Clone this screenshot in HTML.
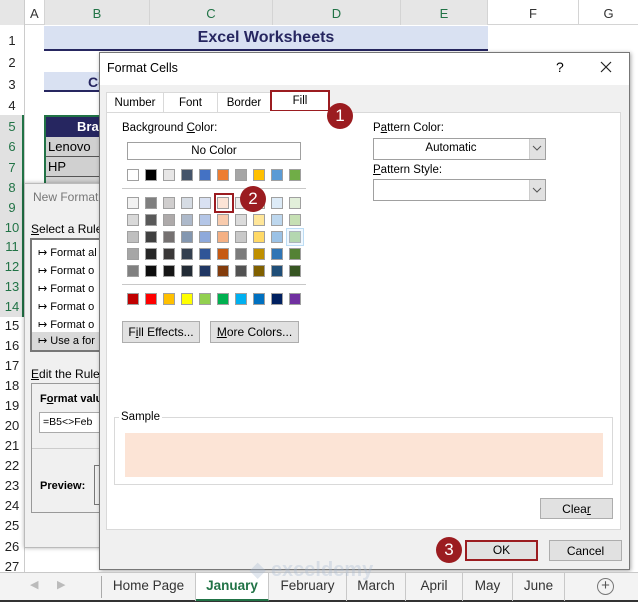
<!DOCTYPE html>
<html><head><meta charset="utf-8"><style>
*{box-sizing:border-box;margin:0;padding:0}
body{width:638px;height:602px;position:relative;overflow:hidden;background:#fff;font-family:"Liberation Sans",Arial,sans-serif;font-size:12px;color:#000}
.a{position:absolute}
.rn{position:absolute;left:0;width:24px;text-align:center;font-size:13px;color:#222}
.sw{position:absolute;width:12px;height:12px;border:1px solid #a0a0a0}
.btn{position:absolute;background:#e1e1e1;border:1px solid #adadad;text-align:center;font-size:12px;line-height:20px}
.mk{position:absolute;width:26px;height:26px;border-radius:50%;background:#9b1c20;color:#fff;font-size:17px;text-align:center;line-height:26px}
.tab{position:absolute;top:573px;height:28px;line-height:26px;text-align:center;font-size:13.5px;color:#333;border-right:1px solid #c8c8c8}
</style></head><body>
<div class="a" style="left:0;top:0;width:638px;height:25px;background:#fff;border-bottom:1px solid #d4d4d4"></div>
<div class="a" style="left:0;top:0;width:25px;height:25px;background:#e6e6e6;border-right:1px solid #ccc"></div>
<div class="a" style="left:44px;top:23px;width:444px;height:2px;background:#217346"></div>
<div class="a" style="left:30px;top:6px;color:#333;font-size:13px">A</div>
<div class="a" style="left:44px;top:0;width:105px;height:25px;border-left:1px solid #d4d4d4;text-align:center;line-height:28px;color:#217346;font-size:13px;background:#e6e6e6">B</div>
<div class="a" style="left:149px;top:0;width:123px;height:25px;border-left:1px solid #d4d4d4;text-align:center;line-height:28px;color:#217346;font-size:13px;background:#e6e6e6">C</div>
<div class="a" style="left:272px;top:0;width:128px;height:25px;border-left:1px solid #d4d4d4;text-align:center;line-height:28px;color:#217346;font-size:13px;background:#e6e6e6">D</div>
<div class="a" style="left:400px;top:0;width:88px;height:25px;border-left:1px solid #d4d4d4;border-right:1px solid #d4d4d4;text-align:center;line-height:28px;color:#217346;font-size:13px;background:#e6e6e6">E</div>
<div class="a" style="left:488px;top:0;width:90px;height:25px;text-align:center;line-height:28px;color:#333;font-size:13px">F</div>
<div class="a" style="left:578px;top:0;width:60px;height:25px;border-left:1px solid #d4d4d4;text-align:center;line-height:28px;color:#333;font-size:13px">G</div>
<div class="a" style="left:0;top:25px;width:25px;height:548px;border-right:1px solid #ccc;background:#fff"></div>
<div class="a" style="left:0;top:115px;width:24px;height:202px;background:#e1e1e1;border-right:2px solid #217346"></div>
<div class="rn" style="top:33px">1</div><div class="rn" style="top:55px">2</div><div class="rn" style="top:77px">3</div><div class="rn" style="top:98px">4</div>
<div class="rn" style="top:119px;color:#217346">5</div><div class="rn" style="top:139px;color:#217346">6</div><div class="rn" style="top:160px;color:#217346">7</div><div class="rn" style="top:180px;color:#217346">8</div>
<div class="rn" style="top:200px;color:#217346">9</div><div class="rn" style="top:220px;color:#217346">10</div><div class="rn" style="top:239px;color:#217346">11</div><div class="rn" style="top:259px;color:#217346">12</div>
<div class="rn" style="top:279px;color:#217346">13</div><div class="rn" style="top:299px;color:#217346">14</div><div class="rn" style="top:318px">15</div><div class="rn" style="top:338px">16</div>
<div class="rn" style="top:358px">17</div><div class="rn" style="top:378px">18</div><div class="rn" style="top:398px">19</div><div class="rn" style="top:418px">20</div>
<div class="rn" style="top:438px">21</div><div class="rn" style="top:458px">22</div><div class="rn" style="top:478px">23</div><div class="rn" style="top:498px">24</div>
<div class="rn" style="top:518px">25</div><div class="rn" style="top:539px">26</div><div class="rn" style="top:559px">27</div>
<div class="a" style="left:44px;top:26px;width:444px;height:25px;background:#d9e1f2;border-bottom:2px solid #262660;text-align:center;font-weight:bold;font-size:16px;line-height:24px;color:#262660">Excel Worksheets</div>
<div class="a" style="left:44px;top:72px;width:60px;height:20px;background:#d9e1f2;border-bottom:2px solid #262660;font-weight:bold;font-size:14px;line-height:20px;color:#262660;padding-left:44px">Co</div>
<div class="a" style="left:44px;top:115px;width:60px;height:70px;border:2px solid #217346;border-right:none;background:#d0d0d0"></div>
<div class="a" style="left:46px;top:117px;width:54px;height:20px;background:#262660;color:#fff;font-weight:bold;font-size:13px;line-height:20px;padding-left:31px">Bra</div>
<div class="a" style="left:46px;top:137px;width:54px;height:20px;border-bottom:1px solid #555;font-size:13px;line-height:19px;padding-left:2px">Lenovo</div>
<div class="a" style="left:46px;top:157px;width:54px;height:20px;border-bottom:1px solid #555;font-size:13px;line-height:19px;padding-left:2px">HP</div>
<div class="a" style="left:24px;top:183px;width:80px;height:365px;background:#f0f0f0;border:1px solid #bbb;box-shadow:0 0 4px rgba(0,0,0,.3)"></div>
<div class="a" style="left:33px;top:190px;color:#777;font-size:12px">New Format</div>
<div class="a" style="left:31px;top:222px;font-size:12px"><u>S</u>elect a Rule</div>
<div class="a" style="left:30px;top:238px;width:74px;height:114px;border:2px solid #777;background:#fff"></div>
<div class="a" style="left:38px;top:244px;font-size:11px;line-height:18px;white-space:nowrap">&#x21A6; Format al<br>&#x21A6; Format o<br>&#x21A6; Format o<br>&#x21A6; Format o<br>&#x21A6; Format o</div>
<div class="a" style="left:32px;top:332px;width:72px;height:18px;background:#d9d9d9;font-size:11px;line-height:18px;padding-left:6px;white-space:nowrap">&#x21A6; Use a for</div>
<div class="a" style="left:31px;top:367px;font-size:12px"><u>E</u>dit the Rule</div>
<div class="a" style="left:31px;top:383px;width:73px;height:130px;border:1px solid #999;background:#f0f0f0"></div>
<div class="a" style="left:40px;top:393px;font-size:11px;font-weight:bold">F<u>o</u>rmat valu</div>
<div class="a" style="left:39px;top:412px;width:65px;height:21px;border:1px solid #aaa;background:#fff;font-size:10.5px;line-height:19px;padding-left:3px;white-space:nowrap">=B5&lt;&gt;Feb</div>
<div class="a" style="left:32px;top:448px;width:72px;height:1px;background:#ccc"></div>
<div class="a" style="left:40px;top:480px;font-size:11px;font-weight:bold">Preview:</div>
<div class="a" style="left:94px;top:465px;width:10px;height:40px;border:1px solid #777"></div>
<div class="a" style="left:99px;top:52px;width:531px;height:518px;background:#f0f0f0;border:1px solid #777;box-shadow:1px 1px 4px rgba(0,0,0,.35)"></div>
<div class="a" style="left:100px;top:53px;width:529px;height:32px;background:#fff"></div>
<div class="a" style="left:107px;top:61px;font-size:12.5px">Format Cells</div>
<div class="a" style="left:556px;top:59px;font-size:14px">?</div>
<svg class="a" style="left:600px;top:61px" width="12" height="12"><path d="M1 1L11 11M11 1L1 11" stroke="#222" stroke-width="1.2"/></svg>
<div class="a" style="left:106px;top:92px;width:58px;height:21px;background:#fff;border:1px solid #d9d9d9;text-align:center;line-height:20px;font-size:11.5px">Number</div>
<div class="a" style="left:163px;top:92px;width:55px;height:21px;background:#fff;border:1px solid #d9d9d9;text-align:center;line-height:20px;font-size:11.5px">Font</div>
<div class="a" style="left:217px;top:92px;width:54px;height:21px;background:#fff;border:1px solid #d9d9d9;text-align:center;line-height:20px;font-size:11.5px">Border</div>
<div class="a" style="left:270px;top:90px;width:60px;height:22px;background:#fff;border:2px solid #9b1c20;text-align:center;line-height:18px;font-size:11.5px">Fill</div>
<div class="a" style="left:106px;top:112px;width:515px;height:418px;background:#fff;border:1px solid #d9d9d9"></div>
<div class="a" style="left:270px;top:111px;width:60px;height:3px;background:#fff"></div>
<div class="a" style="left:122px;top:122px;font-size:11.5px">Background <u>C</u>olor:</div>
<div class="a" style="left:127px;top:142px;width:174px;height:18px;border:1px solid #a0a0a0;text-align:center;line-height:16px;font-size:11.5px">No Color</div>
<div class="a" style="left:122px;top:188px;width:184px;height:1px;background:#c8c8c8"></div>
<div class="a" style="left:122px;top:284px;width:184px;height:1px;background:#c8c8c8"></div>
<div id="grid"></div>
<div class="a" style="left:214px;top:193px;width:20px;height:20px;border:2px solid #9b1c20"></div>
<div class="a" style="left:286px;top:228px;width:18px;height:18px;border:1px solid #bcdcf4;background:rgba(204,232,255,.3)"></div>
<div class="btn" style="left:122px;top:321px;width:78px;height:22px">F<u>i</u>ll Effects...</div>
<div class="btn" style="left:210px;top:321px;width:89px;height:22px"><u>M</u>ore Colors...</div>
<div class="a" style="left:373px;top:122px;font-size:11.5px">P<u>a</u>ttern Color:</div>
<div class="a" style="left:373px;top:138px;width:173px;height:22px;border:1px solid #a0a0a0;background:#fff"></div>
<div class="a" style="left:373px;top:142px;width:156px;text-align:center;font-size:11.5px">Automatic</div>
<div class="a" style="left:529px;top:139px;width:16px;height:20px;background:#e1e1e1;border-left:1px solid #ccc"></div>
<svg class="a" style="left:532px;top:145px" width="10" height="6"><path d="M1 1L5 5L9 1" stroke="#555" fill="none"/></svg>
<div class="a" style="left:373px;top:164px;font-size:11.5px"><u>P</u>attern Style:</div>
<div class="a" style="left:373px;top:179px;width:173px;height:22px;border:1px solid #a0a0a0;background:#fff"></div>
<div class="a" style="left:529px;top:180px;width:16px;height:20px;background:#e1e1e1;border-left:1px solid #ccc"></div>
<svg class="a" style="left:532px;top:187px" width="10" height="6"><path d="M1 1L5 5L9 1" stroke="#555" fill="none"/></svg>
<div class="a" style="left:114px;top:417px;width:499px;height:68px;border:1px solid #d9d9d9"></div>
<div class="a" style="left:119px;top:411px;background:#fff;padding:0 2px;font-size:11.5px">Sample</div>
<div class="a" style="left:125px;top:433px;width:478px;height:44px;background:#fce4d6"></div>
<div class="btn" style="left:540px;top:498px;width:73px;height:21px">Clea<u>r</u></div>
<div class="btn" style="left:465px;top:540px;width:73px;height:21px;border:2px solid #9b1c20;line-height:17px">OK</div>
<div class="btn" style="left:549px;top:540px;width:73px;height:21px">Cancel</div>
<div class="mk" style="left:327px;top:103px">1</div>
<div class="mk" style="left:240px;top:186px">2</div>
<div class="mk" style="left:436px;top:537px">3</div>
<div class="a" style="left:0;top:572px;width:638px;height:30px;background:#f3f3f3;border-top:1px solid #c8c8c8;border-bottom:2px solid #333"></div>
<div class="a" style="left:30px;top:578px;color:#bbb;font-size:11px">&#9664;</div>
<div class="a" style="left:57px;top:578px;color:#bbb;font-size:11px">&#9654;</div>
<div class="a" style="left:101px;top:576px;width:1px;height:22px;background:#aaa"></div>
<div class="tab" style="left:102px;width:94px">Home Page</div>
<div class="tab" style="left:196px;width:73px;background:#fff;color:#217346;font-weight:bold;border-bottom:2px solid #217346">January</div>
<div class="tab" style="left:269px;width:78px">February</div>
<div class="tab" style="left:347px;width:59px">March</div>
<div class="tab" style="left:406px;width:57px">April</div>
<div class="tab" style="left:463px;width:50px">May</div>
<div class="tab" style="left:513px;width:52px">June</div>
<div class="a" style="left:597px;top:578px;width:17px;height:17px;border:1.5px solid #777;border-radius:50%;text-align:center;line-height:14px;color:#555;font-size:15px">+</div>
<div class="a" style="left:250px;top:557px;color:rgba(170,185,210,.35);font-size:20px;font-weight:bold">&#9670; exceldemy</div>
<script>
var rows=[
[169,["fff","000","e7e6e6","44546a","4472c4","ed7d31","a5a5a5","ffc000","5b9bd5","70ad47"]],
[197,["f2f2f2","7f7f7f","d0cece","d6dce4","d9e1f2","fce4d6","ededed","fff2cc","ddebf7","e2efda"]],
[214,["d9d9d9","595959","aeaaaa","adb9ca","b4c6e7","f8cbad","dbdbdb","ffe699","bdd7ee","c6e0b4"]],
[231,["bfbfbf","404040","757171","8497b0","8ea9db","f4b084","c9c9c9","ffd966","9bc2e6","a9d08e"]],
[248,["a6a6a6","262626","3a3838","333f4f","2f5597","c65911","7b7b7b","bf8f00","2f75b5","548235"]],
[265,["808080","0d0d0d","161616","222b35","203764","833c0c","525252","806000","1f4e78","375623"]],
[293,["c00000","ff0000","ffc000","ffff00","92d050","00b050","00b0f0","0070c0","002060","7030a0"]]];
var h="";rows.forEach(function(r){r[1].forEach(function(c,i){h+='<div class="sw" style="left:'+(127+i*18)+'px;top:'+r[0]+'px;background:#'+c+'"></div>';});});
document.getElementById("grid").innerHTML=h;
</script>
</body></html>
